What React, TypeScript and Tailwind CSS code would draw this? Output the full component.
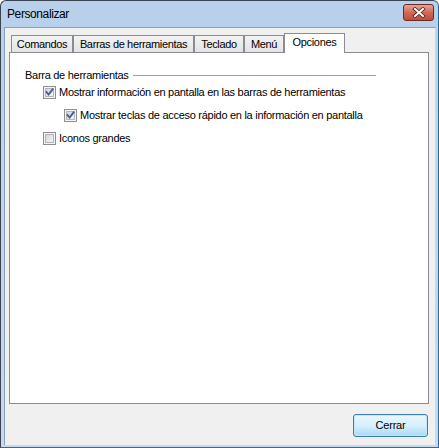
const tabs = [
  { name: "Comandos", w: "w-[62px]" },
  { name: "Barras de herramientas", w: "w-[121px]" },
  { name: "Teclado", w: "w-[50px]" },
  { name: "Menú", w: "w-[40px]" },
];

const Checkbox = ({ checked }: { checked: boolean }) => (
  <div className="relative w-[13px] h-[13px] border border-[#8e8f8f] bg-[#f4f4f4] p-px shrink-0">
    <div className="w-full h-full border border-[#b3b7bd] bg-gradient-to-br from-[#d0d4da] to-[#f6f6f7]" />
    {checked && (
      <svg
        className="absolute left-0 top-0"
        width="11"
        height="11"
        viewBox="0 0 11 11"
        fill="none"
      >
        <path
          d="M2.5 5.2 4.6 7.6 8.6 2.4"
          stroke="#4a5f8f"
          strokeWidth="1.9"
          strokeLinecap="square"
        />
      </svg>
    )}
  </div>
);

const CheckRow = ({
  label,
  checked,
  indent,
}: {
  label: string;
  checked: boolean;
  indent: string;
}) => (
  <div className={`flex items-center gap-[3px] h-[13px] ${indent}`}>
    <Checkbox checked={checked} />
    <span className="text-[11px] leading-none tracking-[-0.28px] text-black whitespace-nowrap">
      {label}
    </span>
  </div>
);

export default function App() {
  return (
    <div
      className="w-[439px] h-[448px] flex flex-col border border-[#3b4250] border-r-[#2a6f93] border-b-[#2a6f93] rounded-t-[6px] bg-gradient-to-b from-[#b9d0ea] to-[#c6d9ef] pl-[3px] pr-[2px] pb-[2px] overflow-hidden"
      style={{ fontFamily: '"Liberation Sans", Arial, sans-serif' }}
    >
      {/* title bar */}
      <div className="h-[26px] flex items-start justify-between shrink-0">
        <span className="mt-[6px] ml-[3px] text-[12px] leading-[14px] tracking-[-0.4px] text-black">
          Personalizar
        </span>
        <div className="mt-[3px] mr-[2px] w-[31px] h-[17px] rounded-[3px] border border-[#6b2a24] bg-gradient-to-b from-[#e7a597] via-[#d0685a] to-[#c24b3c] flex items-center justify-center">
          <svg width="14" height="11" viewBox="0 0 14 11">
            <path
              d="M3 2 11 9M11 2 3 9"
              stroke="#4a1f1a"
              strokeWidth="3.6"
              strokeLinecap="square"
            />
            <path
              d="M3 2 11 9M11 2 3 9"
              stroke="#ffffff"
              strokeWidth="2"
              strokeLinecap="square"
            />
          </svg>
        </div>
      </div>

      {/* client area */}
      <div className="flex-1 flex flex-col bg-[#f0f0f0] border-l border-t border-[#8aa0ba] border-r-[#c8d8ea] border-r pl-[4px] pt-[5px] pr-[6px]">
        <div className="flex items-end h-[19px] pl-[2px]">
          {tabs.map((t) => (
            <div
              key={t.name}
              className={`${t.w} h-[17px] flex items-center justify-center border border-b-0 border-[#898c95] bg-gradient-to-b from-[#f3f3f3] to-[#e3e3e3] text-[11px] leading-none tracking-[-0.35px] text-black`}
            >
              {t.name}
            </div>
          ))}
          <div className="relative z-10 w-[61px] h-[20px] -mb-px flex items-start justify-center pt-[3px] border border-b-0 border-[#898c95] bg-white text-[11px] leading-none tracking-[-0.3px] text-black">
            Opciones
          </div>
        </div>

        <div className="h-[352px] border border-[#898c95] bg-white flex flex-col pt-[15px] pl-[15px] pr-[52px]">
          <div className="flex items-center h-[14px]">
            <span className="text-[11px] leading-none tracking-[-0.28px] text-black whitespace-nowrap">
              Barra de herramientas
            </span>
            <div className="flex-1 h-px bg-[#a0a0a0] ml-[4px] mt-[1px]" />
          </div>
          <div className="flex flex-col gap-[10px] mt-[4px]">
            <CheckRow
              label="Mostrar información en pantalla en las barras de herramientas"
              checked
              indent="ml-[18px]"
            />
            <CheckRow
              label="Mostrar teclas de acceso rápido en la información en pantalla"
              checked
              indent="ml-[39px]"
            />
            <CheckRow label="Iconos grandes" checked={false} indent="ml-[18px]" />
          </div>
        </div>

        <div className="flex justify-end mt-[10px] pr-[1px]">
          <button className="w-[75px] h-[23px] rounded-[3px] border border-[#3c7fb1] bg-gradient-to-b from-[#eaf6fd] via-[#d9f0fc] to-[#a7d9f5] shadow-[inset_0_0_0_1px_#c1e6fa] text-[11px] tracking-[-0.2px] text-black">
            Cerrar
          </button>
        </div>
      </div>
    </div>
  );
}
